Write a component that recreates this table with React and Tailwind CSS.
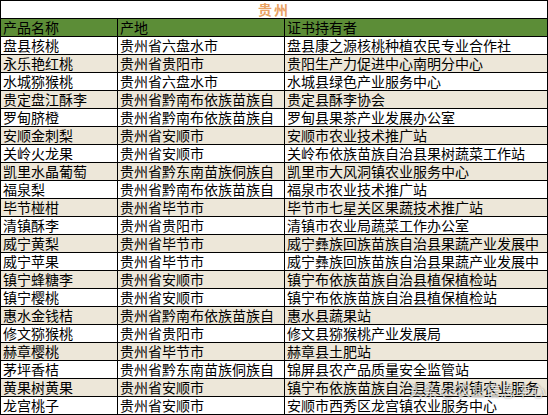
const rows = [
  ['盘县核桃', '贵州省六盘水市', '盘县康之源核桃种植农民专业合作社'],
  ['永乐艳红桃', '贵州省贵阳市', '贵阳生产力促进中心南明分中心'],
  ['水城猕猴桃', '贵州省六盘水市', '水城县绿色产业服务中心'],
  ['贵定盘江酥李', '贵州省黔南布依族苗族自', '贵定县酥李协会'],
  ['罗甸脐橙', '贵州省黔南布依族苗族自', '罗甸县果茶产业发展办公室'],
  ['安顺金刺梨', '贵州省安顺市', '安顺市农业技术推广站'],
  ['关岭火龙果', '贵州省安顺市', '关岭布依族苗族自治县果树蔬菜工作站'],
  ['凯里水晶葡萄', '贵州省黔东南苗族侗族自', '凯里市大风洞镇农业服务中心'],
  ['福泉梨', '贵州省黔南布依族苗族自', '福泉市农业技术推广站'],
  ['毕节椪柑', '贵州省毕节市', '毕节市七星关区果蔬技术推广站'],
  ['清镇酥李', '贵州省贵阳市', '清镇市农业局蔬菜工作办公室'],
  ['威宁黄梨', '贵州省毕节市', '威宁彝族回族苗族自治县果蔬产业发展中'],
  ['威宁苹果', '贵州省毕节市', '威宁彝族回族苗族自治县果蔬产业发展中'],
  ['镇宁蜂糖李', '贵州省安顺市', '镇宁布依族苗族自治县植保植检站'],
  ['镇宁樱桃', '贵州省安顺市', '镇宁布依族苗族自治县植保植检站'],
  ['惠水金钱桔', '贵州省黔南布依族苗族自', '惠水县蔬果站'],
  ['修文猕猴桃', '贵州省贵阳市', '修文县猕猴桃产业发展局'],
  ['赫章樱桃', '贵州省毕节市', '赫章县土肥站'],
  ['茅坪香桔', '贵州省黔东南苗族侗族自', '锦屏县农产品质量安全监管站'],
  ['黄果树黄果', '贵州省安顺市', '镇宁布依族苗族自治县黄果树镇农业服务'],
  ['龙宫桃子', '贵州省安顺市', '安顺市西秀区龙宫镇农业服务中心'],
];

const cell = 'whitespace-nowrap border-r border-black pl-[2px]';

const App = () => {
  return (
    <div
      className="relative w-[548px] h-[415px] overflow-hidden bg-white text-[14px] leading-[17px] text-black"
      style={{ fontFamily: '"Noto Sans CJK SC", "Noto Sans", sans-serif' }}
    >
      <div className="border-t border-l border-black w-[548px]">
        <div className="flex h-[18px] border-b border-r border-black items-center justify-center">
          <span className="font-bold text-[#e9a263] tracking-[2px] leading-[17px]">贵州</span>
        </div>
        <div className="flex h-[18px] border-b border-black bg-[#5c8d37]">
          <div className={`${cell} w-[117px]`}>产品名称</div>
          <div className={`${cell} w-[167px]`}>产地</div>
          <div className={`${cell} w-[263px]`}>证书持有者</div>
        </div>
        {rows.map((r, i) => (
          <div
            key={i}
            className={`flex h-[18px] border-b border-black ${i % 2 === 1 ? 'bg-[#ede7d9]' : 'bg-white'}`}
          >
            <div className={`${cell} w-[117px]`}>{r[0]}</div>
            <div className={`${cell} w-[167px]`}>{r[1]}</div>
            <div className={`${cell} w-[263px]`}>{r[2]}</div>
          </div>
        ))}
      </div>
      <div
        className="absolute left-[408px] top-[381px] text-[15px] text-white/75 whitespace-nowrap"
        style={{ textShadow: '0 0 2px rgba(0,0,0,0.55)' }}
      >
        头条 @农业信息中心
      </div>
    </div>
  );
};

export default App;
